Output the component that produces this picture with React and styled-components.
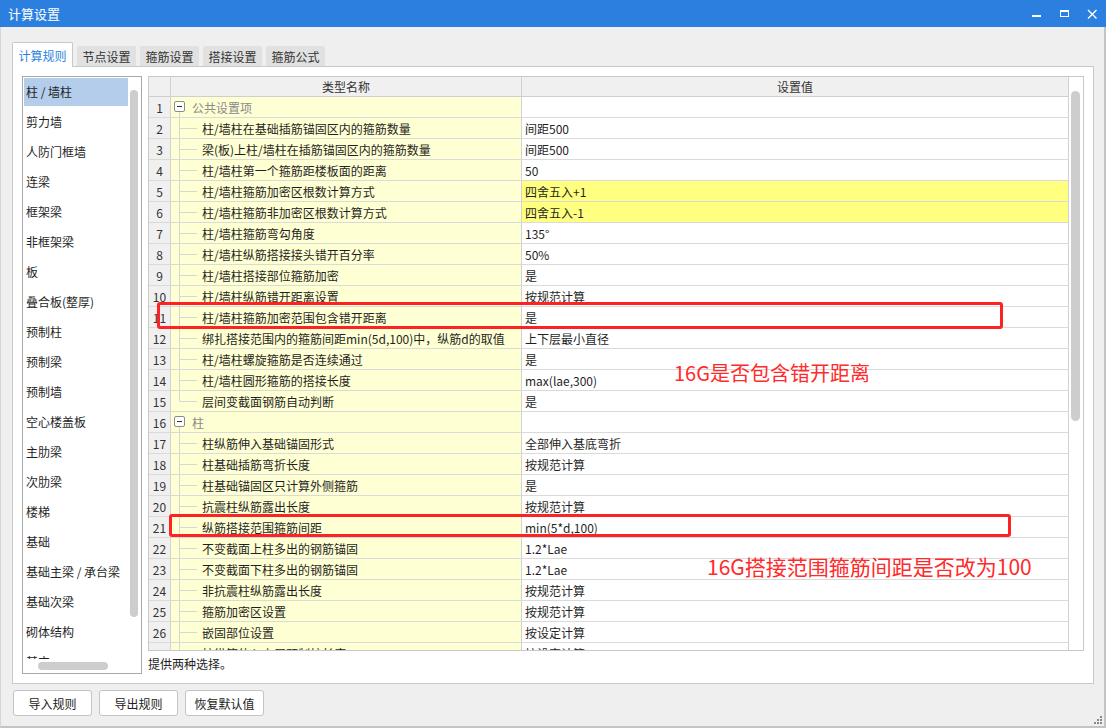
import React from "react";
import styled, { createGlobalStyle } from "styled-components";

const GlobalStyle = createGlobalStyle`
  html, body { margin: 0; padding: 0; }
  body {
    font-family: "Noto Sans CJK SC", "Microsoft YaHei", sans-serif;
    font-size: 12px;
    color: #1f1f1f;
  }
`;

const Window = styled.div`
  position: relative;
  width: 1106px;
  height: 728px;
  display: flex;
  flex-direction: column;
  background: #efefef;
  overflow: hidden;
`;

const TitleBar = styled.div`
  height: 27px;
  flex: none;
  background: #2b7fdf;
  display: flex;
  align-items: center;
  justify-content: space-between;
  padding-left: 8px;
  color: #fff;
  font-size: 13px;
`;

const Controls = styled.div`
  display: flex;
  height: 27px;
`;

const CtrlBtn = styled.div`
  width: 28px;
  height: 27px;
`;

const Body = styled.div`
  flex: 1;
  box-sizing: border-box;
  border-left: 1px solid #d6d6d6;
  border-right: 2px solid #c4c4c4;
  border-bottom: 2px solid #c4c4c4;
  padding: 15px 10px 0 11px;
  display: flex;
  flex-direction: column;
`;

const TabBar = styled.div`
  height: 24px;
  display: flex;
  align-items: flex-end;
  gap: 4px;
`;

const Tab = styled.div`
  position: relative;
  z-index: 1;
  box-sizing: border-box;
  display: flex;
  align-items: center;
  justify-content: center;
  width: ${(p) => (p.active ? "61px" : "59px")};
  height: ${(p) => (p.active ? "25px" : "20px")};
  margin-bottom: ${(p) => (p.active ? "-1px" : "0")};
  background: ${(p) => (p.active ? "#fff" : "#e1e1e1")};
  border: ${(p) => (p.active ? "1px solid #c8c8c8" : "none")};
  border-bottom: none;
  border-radius: 2px 2px 0 0;
  color: ${(p) => (p.active ? "#2b7fdf" : "#333")};
  font-size: 12px;
`;

const Panel = styled.div`
  height: 618px;
  box-sizing: border-box;
  background: #fff;
  border: 1px solid #c8c8c8;
  padding: 9px;
  display: flex;
  gap: 6px;
`;

const List = styled.div`
  width: 120px;
  box-sizing: border-box;
  border: 1px solid #a9a9a9;
  display: flex;
  flex-direction: column;
`;

const ListMain = styled.div`
  flex: 1;
  display: flex;
  min-height: 0;
`;

const ListItems = styled.div`
  flex: 1;
  overflow: hidden;
  padding: 1px 0 0 1px;
  display: flex;
  flex-direction: column;
  gap: 2px;
`;

const ListItem = styled.div`
  flex: none;
  height: 28px;
  line-height: 28px;
  padding-left: 2px;
  white-space: nowrap;
  background: ${(p) => (p.selected ? "#b3cdeb" : "transparent")};
  color: #1f1f1f;
`;

const VLane = styled.div`
  width: 13px;
  flex: none;
`;

const VThumb = styled.div`
  margin: ${(p) => p.top}px 0 0 ${(p) => p.left}px;
  width: ${(p) => p.w}px;
  height: ${(p) => p.h}px;
  border-radius: 5px;
  background: #cdcdcd;
`;

const HLane = styled.div`
  height: 14px;
  flex: none;
  padding: 3px 0 0 15px;
  box-sizing: border-box;
`;

const HThumb = styled.div`
  width: 70px;
  height: 8px;
  border-radius: 4px;
  background: #cdcdcd;
`;

const RightCol = styled.div`
  flex: 1;
  display: flex;
  flex-direction: column;
`;

const Grid = styled.div`
  height: 575px;
  box-sizing: border-box;
  border: 1px solid #c8c8c8;
  display: flex;
`;

const Table = styled.div`
  flex: 1;
  overflow: hidden;
`;

const cols = "22px 351px 1fr";

const HeaderRow = styled.div`
  display: grid;
  grid-template-columns: ${cols};
  height: 20px;
  box-sizing: border-box;
  border-bottom: 1px solid #cfcfcf;
  background: #f0f0f0;
`;

const HeadCell = styled.div`
  box-sizing: border-box;
  border-right: ${(p) => (p.last ? "none" : "1px solid #d2d2d2")};
  display: flex;
  align-items: center;
  justify-content: center;
  color: #333;
`;

const Row = styled.div`
  display: grid;
  grid-template-columns: ${cols};
  height: 21px;
  box-sizing: border-box;
  border-bottom: 1px solid #dadada;
`;

const NumCell = styled.div`
  box-sizing: border-box;
  background: #f0f0f0;
  border-right: 1px solid #d2d2d2;
  display: flex;
  align-items: center;
  justify-content: center;
  color: #333;
  font-size: 12px;
`;

const NameCell = styled.div`
  box-sizing: border-box;
  background: #ffffd4;
  border-right: 1px solid #d2d2d2;
  display: flex;
  align-items: center;
  white-space: nowrap;
  overflow: hidden;
`;

const NameText = styled.span`
  color: ${(p) => (p.group ? "#8a8a8a" : "#1f1f1f")};
`;

const ValueCell = styled.div`
  background: ${(p) => (p.hl ? "#ffff80" : "#fff")};
  display: flex;
  align-items: center;
  padding-left: 3px;
  white-space: nowrap;
  overflow: hidden;
`;

const GridLane = styled.div`
  width: 15px;
  flex: none;
  box-sizing: border-box;
  border-left: 1px solid #d2d2d2;
`;

const Desc = styled.div`
  margin-top: 4px;
  line-height: 18px;
  color: #1f1f1f;
`;

const ButtonBar = styled.div`
  display: flex;
  gap: 7px;
  margin: 6px 0 0 1px;
`;

const Button = styled.div`
  width: 79px;
  height: 26px;
  box-sizing: border-box;
  border: 1px solid #c4c4c4;
  border-radius: 3px;
  background: #fff;
  display: flex;
  align-items: center;
  justify-content: center;
  color: #222;
`;

const Mark = styled.div`
  position: absolute;
  left: ${(p) => p.x}px;
  top: ${(p) => p.y}px;
  width: ${(p) => p.w}px;
  height: ${(p) => p.h}px;
  box-sizing: border-box;
  border: 3px solid #ff2222;
  border-radius: 3px;
  pointer-events: none;
`;

const Note = styled.div`
  position: absolute;
  left: ${(p) => p.x}px;
  top: ${(p) => p.y}px;
  font-size: ${(p) => p.size || 20}px;
  line-height: 24px;
  color: #ff2a2a;
  white-space: nowrap;
`;

const Grip = styled.svg`
  position: absolute;
  right: 3px;
  bottom: 3px;
`;

const categories = [
  "柱 / 墙柱", "剪力墙", "人防门框墙", "连梁", "框架梁", "非框架梁", "板",
  "叠合板(整厚)", "预制柱", "预制梁", "预制墙", "空心楼盖板", "主肋梁", "次肋梁",
  "楼梯", "基础", "基础主梁 / 承台梁", "基础次梁", "砌体结构", "其它",
];

const rows = [
  { group: true, name: "公共设置项" },
  { name: "柱/墙柱在基础插筋锚固区内的箍筋数量", value: "间距500" },
  { name: "梁(板)上柱/墙柱在插筋锚固区内的箍筋数量", value: "间距500" },
  { name: "柱/墙柱第一个箍筋距楼板面的距离", value: "50" },
  { name: "柱/墙柱箍筋加密区根数计算方式", value: "四舍五入+1", hl: true },
  { name: "柱/墙柱箍筋非加密区根数计算方式", value: "四舍五入-1", hl: true },
  { name: "柱/墙柱箍筋弯勾角度", value: "135°" },
  { name: "柱/墙柱纵筋搭接接头错开百分率", value: "50%" },
  { name: "柱/墙柱搭接部位箍筋加密", value: "是" },
  { name: "柱/墙柱纵筋错开距离设置", value: "按规范计算" },
  { name: "柱/墙柱箍筋加密范围包含错开距离", value: "是" },
  { name: "绑扎搭接范围内的箍筋间距min(5d,100)中，纵筋d的取值", value: "上下层最小直径" },
  { name: "柱/墙柱螺旋箍筋是否连续通过", value: "是" },
  { name: "柱/墙柱圆形箍筋的搭接长度", value: "max(lae,300)" },
  { name: "层间变截面钢筋自动判断", value: "是", last: true },
  { group: true, name: "柱" },
  { name: "柱纵筋伸入基础锚固形式", value: "全部伸入基底弯折" },
  { name: "柱基础插筋弯折长度", value: "按规范计算" },
  { name: "柱基础锚固区只计算外侧箍筋", value: "是" },
  { name: "抗震柱纵筋露出长度", value: "按规范计算" },
  { name: "纵筋搭接范围箍筋间距", value: "min(5*d,100)" },
  { name: "不变截面上柱多出的钢筋锚固", value: "1.2*Lae" },
  { name: "不变截面下柱多出的钢筋锚固", value: "1.2*Lae" },
  { name: "非抗震柱纵筋露出长度", value: "按规范计算" },
  { name: "箍筋加密区设置", value: "按规范计算" },
  { name: "嵌固部位设置", value: "按设定计算" },
  { name: "柱纵筋伸入上层预制柱长度", value: "按设定计算" },
];

// 树形连接线
const Branch = ({ last }) => (
  <svg width="31" height="20" style={{ flex: "none" }}>
    <line x1="8.5" y1="0" x2="8.5" y2={last ? 10.5 : 20} stroke="#d6d6d6" />
    <line x1="8.5" y1="10.5" x2="26" y2="10.5" stroke="#d6d6d6" />
  </svg>
);

const Collapse = () => (
  <svg width="21" height="20" style={{ flex: "none" }}>
    <rect x="3.5" y="4.5" width="10" height="10" rx="1.5" fill="#fff" stroke="#8c8c8c" />
    <line x1="6" y1="9.5" x2="11" y2="9.5" stroke="#333" />
    <line x1="8.5" y1="15" x2="8.5" y2="20" stroke="#d6d6d6" />
  </svg>
);

const App = () => {
  return (
    <Window>
      <GlobalStyle />
      <TitleBar>
        <span>计算设置</span>
        <Controls>
          <CtrlBtn>
            <svg width="28" height="27">
              <rect x="10" y="15" width="9" height="2" fill="#fff" />
            </svg>
          </CtrlBtn>
          <CtrlBtn>
            <svg width="28" height="27">
              <rect x="10.5" y="10.5" width="8" height="6" fill="none" stroke="#fff" />
              <rect x="10" y="10" width="9" height="2" fill="#fff" />
            </svg>
          </CtrlBtn>
          <CtrlBtn>
            <svg width="28" height="27">
              <path d="M10 10 L18.5 18.5 M18.5 10 L10 18.5" stroke="#fff" strokeWidth="1.4" />
            </svg>
          </CtrlBtn>
        </Controls>
      </TitleBar>
      <Body>
        <TabBar>
          <Tab active>计算规则</Tab>
          <Tab>节点设置</Tab>
          <Tab>箍筋设置</Tab>
          <Tab>搭接设置</Tab>
          <Tab>箍筋公式</Tab>
        </TabBar>
        <Panel>
          <List>
            <ListMain>
              <ListItems>
                {categories.map((c, i) => (
                  <ListItem key={c} selected={i === 0}>{c}</ListItem>
                ))}
              </ListItems>
              <VLane>
                <VThumb top={13} left={2} w={8} h={527} />
              </VLane>
            </ListMain>
            <HLane>
              <HThumb />
            </HLane>
          </List>
          <RightCol>
            <Grid>
              <Table>
                <HeaderRow>
                  <HeadCell />
                  <HeadCell>类型名称</HeadCell>
                  <HeadCell last>设置值</HeadCell>
                </HeaderRow>
                {rows.map((r, i) => (
                  <Row key={i}>
                    <NumCell>{i + 1}</NumCell>
                    <NameCell>
                      {r.group ? <Collapse /> : <Branch last={r.last} />}
                      <NameText group={r.group}>{r.name}</NameText>
                    </NameCell>
                    <ValueCell hl={r.hl}>{r.value}</ValueCell>
                  </Row>
                ))}
              </Table>
              <GridLane>
                <VThumb top={14} left={2} w={9} h={330} />
              </GridLane>
            </Grid>
            <Desc>提供两种选择。</Desc>
          </RightCol>
        </Panel>
        <ButtonBar>
          <Button>导入规则</Button>
          <Button>导出规则</Button>
          <Button>恢复默认值</Button>
        </ButtonBar>
      </Body>

      <Mark x={157} y={302} w={846} h={27} />
      <Mark x={169} y={514} w={842} h={23} />
      <Note x={674} y={361}>16G是否包含错开距离</Note>
      <Note x={707} y={554} size={21}>16G搭接范围箍筋间距是否改为100</Note>
      <Grip width="10" height="10">
        {[[7, 1], [4, 4], [7, 4], [1, 7], [4, 7], [7, 7]].map(([x, y]) => (
          <rect key={`${x}-${y}`} x={x} y={y} width="2" height="2" fill="#8a8a8a" />
        ))}
      </Grip>
    </Window>
  );
};

export default App;
